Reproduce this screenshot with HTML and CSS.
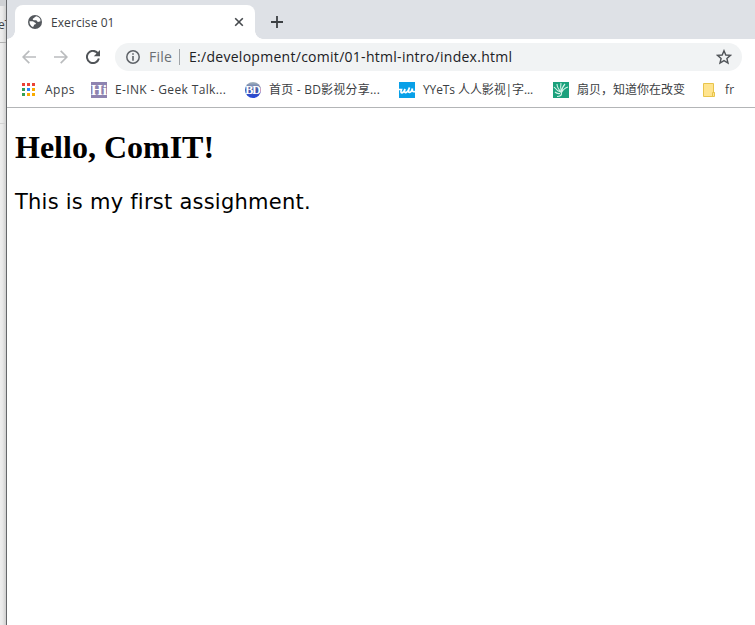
FILE: index.html
```html
<!DOCTYPE html>
<html lang="zh-CN">
<head>
<meta charset="utf-8">
<title>Exercise 01</title>
<link rel="stylesheet" href="styles.css">
</head>
<body>
<aside class="behind"><div class="behind-tab"></div><div class="behind-bar">eT</div><div class="behind-row"></div></aside>
<div class="window">
  <header class="tabs">
    <div class="tab">
      <svg class="globe" width="14" height="14" viewBox="0 0 14 14"><circle cx="7" cy="7" r="7" fill="#54585d"/><path d="M8.5 1.3 C6.5 1.7 6.8 3 5.5 3.3 C4.2 3.6 4.6 5.2 6 5.2 H8 C9.2 5.2 8.8 6.7 10 6.9 L12.5 6.3 C12.8 4 11 1.7 8.5 1.3Z M1.5 6.3 H4.5 C6 6.4 5.9 7.5 7.2 7.7 C8.5 8 8 9.5 6.7 9.5 C5.6 9.5 6.2 11 5 12.1 C2.8 11.3 1.3 9 1.5 6.3Z" fill="#fff"/></svg>
      <span class="tab-title">Exercise 01</span>
      <svg class="close" width="10" height="10" viewBox="0 0 10 10"><path d="M1.2 1.2 8.8 8.8M8.8 1.2 1.2 8.8" stroke="#45494d" stroke-width="1.6"/></svg>
    </div>
    <svg class="plus" width="12" height="12" viewBox="0 0 12 12"><path d="M6 0V12M0 6H12" stroke="#3c4043" stroke-width="1.8"/></svg>
  </header>
  <nav class="toolbar">
    <svg class="arrow" width="14" height="14" viewBox="0 0 14 14"><path d="M14 7H1.3M7.3 .8 1.1 7l6.2 6.2" fill="none" stroke="#babcbe" stroke-width="1.7"/></svg>
    <svg class="arrow" width="14" height="14" viewBox="0 0 14 14"><path d="M0 7H12.7M6.7 .8 12.9 7l-6.2 6.2" fill="none" stroke="#babcbe" stroke-width="1.7"/></svg>
    <svg class="reload" width="14" height="14" viewBox="0 0 14 14"><path d="M12.1 3.6A6.1 6.1 0 1 0 12.9 8.6" fill="none" stroke="#505458" stroke-width="2"/><path d="M14 0V6.2H7.8Z" fill="#505458"/></svg>
    <div class="omnibox">
      <svg width="14" height="14" viewBox="0 0 14 14"><circle cx="7" cy="7" r="6.2" fill="none" stroke="#5f6368" stroke-width="1.5"/><path d="M7 3.2V4.8M7 6V10.7" stroke="#5f6368" stroke-width="1.6"/></svg>
      <span class="scheme">File</span><span class="divider"></span><span class="url">E:/development/comit/01-html-intro/index.html</span>
      <svg class="star" width="16" height="16" viewBox="0 0 16 16"><path d="M8 1.7 9.8 6l4.6.4-3.5 3 1.1 4.6L8 11.6 4 14l1.1-4.6-3.5-3L6.200 6Z" fill="none" stroke="#505458" stroke-width="1.4"/></svg>
    </div>
  </nav>
  <div class="bookmarks">
    <div class="bookmark"><svg width="16" height="16" viewBox="0 0 16 16"><g fill="#ea4335"><path d="M1 1h3v3H1zM6 1h3v3H6zM11 1h3v3h-3z"/></g><path d="M1 6h3v3H1zM1 11h3v3H1z" fill="#34a056"/><path d="M6 6h3v3H6z" fill="#2685fc"/><path d="M11 6h3v3h-3zM6 11h3v3H6zM11 11h3v3h-3z" fill="#f9ab00"/></svg><span class="apps">Apps</span></div>
    <div class="bookmark"><span class="hi">Hi</span><span class="eink">E-INK - Geek Talk...</span></div>
    <div class="bookmark"><span class="bd">BD</span><span class="home">首页 - BD影视分享...</span></div>
    <div class="bookmark"><svg width="16" height="16" viewBox="0 0 16 16"><path fill="#08a0e8" d="M0 0h16v16H0z"/><path d="M0 7.500H2.500Q1.200 11 3 10.800Q5 10.500 6 7Q4.800 11 6.800 10.600Q9 10 10.500 5.500Q8.500 10.500 10.500 10.500Q12.500 10 13.500 6.500Q12.500 10.500 16 9.500" fill="none" stroke="#fff" stroke-width="1.700"/></svg><span class="yyets">YYeTs 人人影视|字...</span></div>
    <div class="bookmark"><svg width="16" height="16" viewBox="0 0 16 16"><path fill="#1ba17c" d="M0 0h16v16H0z"/><path d="M4 14.500Q9 14.500 8.500 10.500Q4 9 1 5M8.500 10.500Q4 6 4 2M8.500 10.500Q7 5 8 1M8.500 10.500Q9 5 12 2M8.500 10.500Q11 6 15 5M7 11.500Q4 12 2 10" fill="none" stroke="#d4f3e8" stroke-width="1.100"/></svg><span class="shell">扇贝，知道你在改变</span></div>
    <div class="bookmark"><svg width="16" height="16" viewBox="0 0 16 16"><path d="M1.500 1.500H11.500V10.500H12.500V14.500H1.500Z" fill="#ffe48e" stroke="#e8c44b"/><path d="M10.500 14V10.500h2" fill="none" stroke="#e8c44b"/></svg><span class="fr">fr</span></div>
  </div>
  <main><h1>Hello, ComIT!</h1><p>This is my first assighment.</p></main>
</div>
</body>
</html>
```
FILE: styles.css
```css
* { box-sizing: border-box; }
body { margin: 0; height: 625px; display: flex; overflow: hidden; background: #fff; color: #3c4043; font-family: "Open Sans", "Noto Sans CJK SC", sans-serif; }
svg { display: block; flex: none; }
.behind { width: 6px; flex: none; overflow: hidden; background: linear-gradient(90deg, #eee, #e9e9e9 40%, #cfcfcf); }
.behind-tab { height: 6px; background: #cfd1d4; }
.behind-bar { height: 37px; padding-top: 8px; font-size: 12px; line-height: 22px; border-bottom: 1px solid #b0b0b0; text-indent: -2px; }
.behind-row { height: 81px; border-bottom: 1px solid #d2d2d2; }
.window { flex: 1; min-width: 0; border-left: 1px solid #65676a; background: #fff; }
.tabs { height: 39px; display: flex; align-items: flex-end; padding-left: 8px; background: #dee1e6; }
.tab { position: relative; width: 240px; height: 34px; display: flex; align-items: center; padding: 0 11px 0 13px; background: #fff; border-radius: 8px 8px 0 0; }
.tab::before, .tab::after { content: ""; position: absolute; bottom: 0; width: 8px; height: 8px; }
.tab::before { left: -8px; background: radial-gradient(circle at 0 0, transparent 7.5px, #fff 8px); }
.tab::after { right: -8px; background: radial-gradient(circle at 100% 0, transparent 7.5px, #fff 8px); }
.tab-title { margin: 1px 0 0 9px; font-size: 12px; line-height: 16px; white-space: nowrap; letter-spacing: .08px; }
.close { margin-left: auto; }
.plus { margin: 0 0 11px 16px; }
.toolbar { height: 36px; display: flex; align-items: center; padding: 0 13px 0 15px; }
.arrow { margin-right: 18px; }
.reload { margin-right: 15px; }
.omnibox { flex: 1; height: 28px; display: flex; align-items: center; padding: 0 10px 0 11px; border-radius: 14px; background: #f1f3f4; font-size: 14px; line-height: 20px; white-space: nowrap; }
.scheme { width: 23px; margin-left: 9px; color: #6b6f73; letter-spacing: .25px; }
.divider { width: 1px; height: 16px; margin: 0 9px 0 7px; background: #a0a4a8; }
.url { color: #202124; letter-spacing: .28px; }
.star { margin-left: auto; }
.bookmarks { height: 33px; display: grid; grid-template-columns: 70px 154px 154px 154px 149px 1fr; padding: 0 0 3px 14px; border-bottom: 1px solid #b3b5b7; font-size: 12px; }
.bookmark { display: flex; align-items: center; gap: 8px; white-space: nowrap; line-height: 18px; min-width: 0; }
.apps { letter-spacing: .5px; }
.eink { letter-spacing: .36px; }
.home { letter-spacing: .22px; }
.yyets { letter-spacing: -.1px; }
.fr { margin-left: -1px; letter-spacing: .3px; }
.hi, .bd { width: 16px; height: 16px; flex: none; text-align: center; color: #fff; line-height: 16px; }
.hi { background: #8e83b0; font: bold 15px/16px "Liberation Serif", serif; }
.bd { border-radius: 50%; background: linear-gradient(#a9b8bd, #4055a5 50%, #2448df); font: bold 12px/16px "Liberation Serif", serif; letter-spacing: -1px; text-indent: -1px; }
main { padding: 0 8px; color: #000; }
h1 { margin: 21px 0 0; font: bold 32px/37px "Liberation Serif", serif; white-space: nowrap; }
p { margin: 22px 0 0; font: 21px/28px "DejaVu Sans", sans-serif; letter-spacing: .24px; white-space: nowrap; }
```
